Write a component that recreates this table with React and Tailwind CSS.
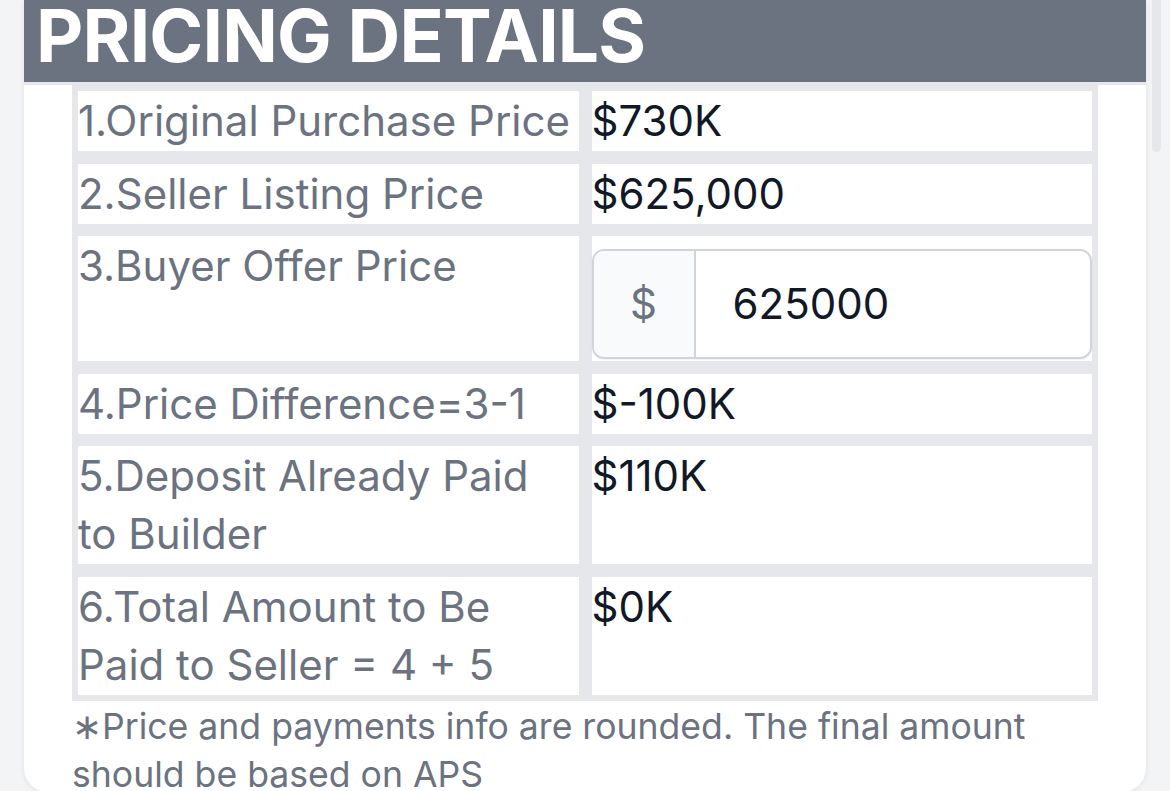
const rows = [
  { label: "1.Original Purchase Price", value: "$730K" },
  { label: "2.Seller Listing Price", value: "$625,000" },
  { label: "3.Buyer Offer Price", input: "625000" },
  { label: "4.Price Difference=3-1", value: "$-100K" },
  { label: "5.Deposit Already Paid to Builder", value: "$110K" },
  { label: "6.Total Amount to Be Paid to Seller = 4 + 5", value: "$0K" },
];

export default function App() {
  return (
    <div
      className="relative h-[791px] w-full overflow-hidden bg-[#f3f4f6]"
      style={{ fontFamily: "Inter, 'Noto Sans', sans-serif" }}
    >
      {/* scrollbar thumb */}
      <div className="absolute right-[9px] top-0 h-[152px] w-[9px] rounded-b-full bg-[#e5e7eb]" />

      <div className="ml-[24px] mr-[24px] h-[792px] overflow-hidden rounded-b-[24px] bg-white shadow-[0_1px_6px_rgba(0,0,0,0.08)]">
        {/* Header */}
        <div className="h-[82px] overflow-hidden bg-[#6b7280] pl-[12px]">
          <h2 className="-mt-[1px] text-[73px] font-bold leading-none tracking-[-0.8px] text-white">
            PRICING DETAILS
          </h2>
        </div>
        <div className="h-[3px] bg-[#e5e7eb]" />

        {/* Table */}
        <div className="mx-[48px] grid grid-cols-2 gap-x-[13px] gap-y-[12.6px] bg-[#e5e7eb] p-[6px] text-[42px] leading-[58px]">
          {rows.map(row => (
            <div key={row.label} className="contents">
              <div className="bg-white py-px text-[#6b7280]">
                {row.label}
              </div>
              {row.input ? (
                <div className="bg-white pt-[13px] pb-[2px]">
                  <div className="flex h-[110px] overflow-hidden rounded-[12px] border-2 border-[#d1d5db] shadow-[0_1px_2px_rgba(0,0,0,0.06)]">
                    <span className="flex w-[102px] items-center justify-center border-r-2 border-[#d1d5db] bg-[#f9fafb] text-[#6b7280]">
                      $
                    </span>
                    <span className="flex items-center pl-[37px] text-[#111827]">
                      {row.input}
                    </span>
                  </div>
                </div>
              ) : (
                <div className="bg-white py-px text-[#111827]">
                  {row.value}
                </div>
              )}
            </div>
          ))}
        </div>

        {/* Footnote */}
        <p className="ml-[48px] mr-[96px] mt-[2px] text-[35.6px] leading-[48px] text-[#6b7280]">
          ∗Price and payments info are rounded. The final amount should be based on APS
        </p>
      </div>
    </div>
  );
}
